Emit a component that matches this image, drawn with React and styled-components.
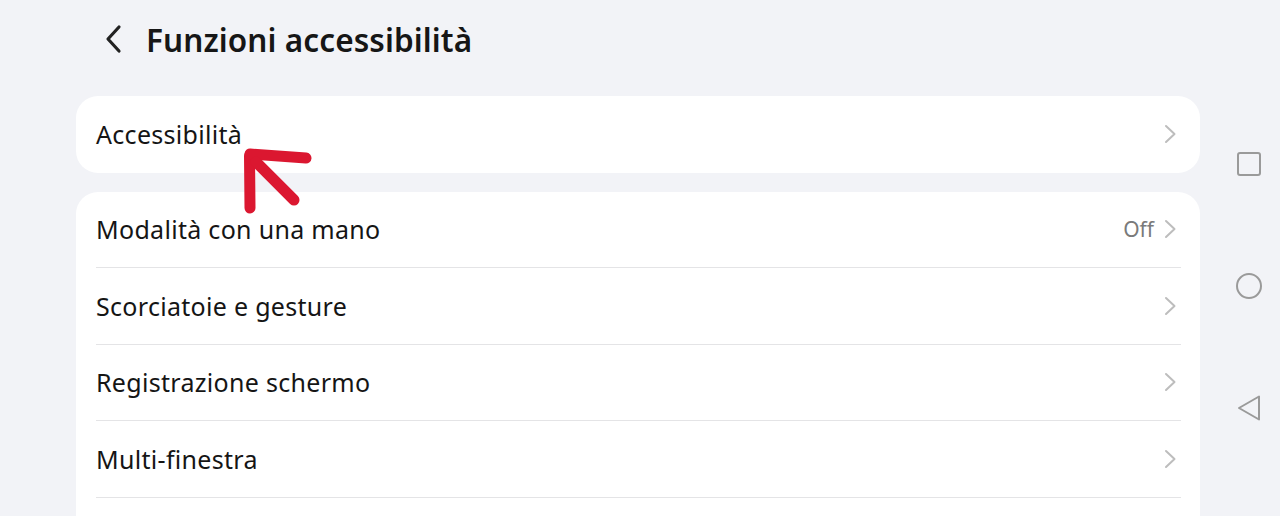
import React from 'react';
import styled, { createGlobalStyle } from 'styled-components';

const GlobalStyle = createGlobalStyle`
  *, *::before, *::after {
    box-sizing: border-box;
  }
  html, body {
    margin: 0;
    padding: 0;
    background: #f2f3f7;
    font-family: 'Noto Sans', 'Open Sans', sans-serif;
    -webkit-font-smoothing: antialiased;
  }
`;

const Screen = styled.div`
  display: flex;
  width: 1280px;
  height: 516px;
  overflow: hidden;
  background: #f2f3f7;
`;

const Main = styled.div`
  position: relative;
  flex: 0 0 1124px;
  margin-left: 76px;
  display: flex;
  flex-direction: column;

  & > * {
    flex-shrink: 0;
  }
`;

const Header = styled.div`
  display: flex;
  align-items: center;
  height: 78px;
  padding-left: 28px;
  gap: 22px;
  margin-bottom: 18px;
`;

const BackButton = styled.button`
  border: 0;
  background: none;
  padding: 0;
  display: flex;
  align-items: center;
  color: #1f1f1f;
`;

const Title = styled.h1`
  margin: 0;
  font-size: 31.5px;
  font-weight: 600;
  color: #161616;
  letter-spacing: 0.1px;
`;

const Card = styled.div`
  background: #ffffff;
  border-radius: 22px;
  padding: 0 19px 0 20px;
  margin-bottom: ${p => p.$gap || 0}px;
`;

const Row = styled.div`
  display: flex;
  align-items: center;
  height: 76.5px;
  border-bottom: ${p => (p.$divider ? '1px solid #e4e4e6' : 'none')};
`;

const Label = styled.span`
  flex: 1;
  font-size: 25px;
  letter-spacing: 0.3px;
  color: #151515;
`;

const Value = styled.span`
  font-size: 21px;
  color: #7a7a7a;
  margin-right: 10px;
`;

const Chevron = styled.svg`
  width: 13px;
  height: 20px;
  margin-right: 4px;
`;

const NavBar = styled.div`
  flex: 0 0 80px;
  display: flex;
  flex-direction: column;
  align-items: center;
  padding-left: 18px;
  padding-top: 151px;
  gap: 96px;
`;

const NavIcon = styled.svg`
  width: 26px;
  height: 26px;
`;

const Annotation = styled.svg`
  position: absolute;
  left: 160px;
  top: 144px;
  width: 80px;
  height: 76px;
  pointer-events: none;
`;

function ChevronIcon() {
  return (
    <Chevron viewBox="0 0 13 20">
      <path d="M2 2 L10.5 10 L2 18" fill="none" stroke="#bdbdbd" strokeWidth="2" strokeLinecap="round" strokeLinejoin="round" />
    </Chevron>
  );
}

const items = [
  { label: 'Modalità con una mano', value: 'Off' },
  { label: 'Scorciatoie e gesture' },
  { label: 'Registrazione schermo' },
  { label: 'Multi-finestra' },
];

export default function App() {
  return (
    <>
      <GlobalStyle />
      <Screen>
        <Main>
          <Header>
            <BackButton aria-label="Indietro">
              <svg width="20" height="30" viewBox="0 0 20 30">
                <path d="M15 3 L4 15 L15 27" fill="none" stroke="#222" strokeWidth="3.2" strokeLinecap="round" strokeLinejoin="round" />
              </svg>
            </BackButton>
            <Title>Funzioni accessibilità</Title>
          </Header>

          <Card $gap={19}>
            <Row>
              <Label>Accessibilità</Label>
              <ChevronIcon />
            </Row>
          </Card>

          <Card>
            {items.map(it => (
              <Row key={it.label} $divider>
                <Label>{it.label}</Label>
                {it.value && <Value>{it.value}</Value>}
                <ChevronIcon />
              </Row>
            ))}
            <Row />
          </Card>

          <Annotation viewBox="236 144 80 76">
            <g fill="none" stroke="#db1730" strokeWidth="11" strokeLinecap="round" strokeLinejoin="round">
              <path d="M250 208 L249.5 156" />
              <path d="M250 154 L306 158" />
              <path d="M256 162 L294 200" />
            </g>
          </Annotation>
        </Main>

        <NavBar>
          <NavIcon viewBox="0 0 26 26">
            <rect x="2" y="2" width="22" height="22" rx="2" fill="none" stroke="#9a9a9a" strokeWidth="2" />
          </NavIcon>
          <NavIcon viewBox="0 0 26 26">
            <circle cx="13" cy="13" r="12" fill="none" stroke="#9a9a9a" strokeWidth="2" />
          </NavIcon>
          <NavIcon viewBox="0 0 26 26">
            <path d="M23 1.5 L23 24.5 L3 13 Z" fill="none" stroke="#9a9a9a" strokeWidth="2" strokeLinejoin="round" />
          </NavIcon>
        </NavBar>
      </Screen>
    </>
  );
}
